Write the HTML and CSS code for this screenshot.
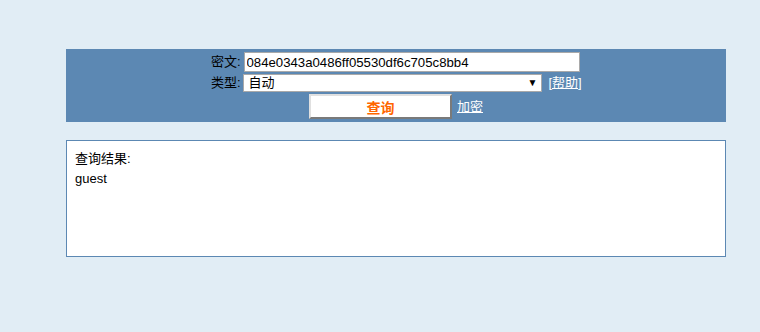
FILE: index.html
```html
<!DOCTYPE html>
<html lang="zh-CN">
<head>
  <meta charset="UTF-8">
  <title>MD5 查询</title>
  <link rel="stylesheet" href="styles.css">
</head>
<body>
  <!-- Query form panel -->
  <div class="panel">
    <div class="form-grid">
      <label class="label" for="hash">密文:</label>
      <input class="hash-input" id="hash" type="text" value="084e0343a0486ff05530df6c705c8bb4">
      <label class="label" for="type">类型:</label>
      <div class="type-cell">
        <div class="type-select" id="type">
          <span>自动</span>
          <span class="arrow">▼</span>
        </div>
        <a href="#" class="panel-link">[帮助]</a>
      </div>
    </div>
    <div class="actions">
      <button class="query-button" type="button">查询</button>
      <a href="#" class="panel-link">加密</a>
    </div>
  </div>

  <!-- Result box -->
  <div class="result">
    <div>查询结果:</div>
    <div>guest</div>
  </div>
</body>
</html>
```

FILE: styles.css
```css
body {
  margin: 0;
  background-color: #e1edf5;
  font-family: "Liberation Sans", "Noto Sans CJK SC", sans-serif;
  font-size: 13px;
  color: #000;
}
/* Blue query panel */
.panel {
  width: 660px;
  height: 73px;
  margin: 49px 0 0 66px;
  padding-top: 3px;
  background-color: #5c88b3;
  display: flex;
  flex-direction: column;
  align-items: center;
  box-sizing: border-box;
}
.form-grid {
  display: grid;
  grid-template-columns: 37px 342px;
  grid-template-rows: 20px 18px;
  row-gap: 2px;
  align-items: center;
  margin-left: -2px;
}
.label {
  font-size: 13px;
  line-height: 18px;
  text-align: right;
  padding-right: 2px;
  white-space: nowrap;
}
.hash-input {
  width: 336px;
  height: 20px;
  margin: 0 0 0 1px;
  padding: 0 2px;
  border: 1px solid #a9a9a9;
  box-sizing: border-box;
  font-family: "Liberation Sans", sans-serif;
  font-size: 13.2px;
  color: #000;
  background: #fff;
}
.type-cell {
  display: flex;
  align-items: center;
  gap: 7px;
  line-height: 18px;
}
.type-select {
  width: 299px;
  height: 18px;
  border: 1px solid #a9a9a9;
  box-sizing: border-box;
  background: #fff;
  display: flex;
  align-items: center;
  justify-content: space-between;
  padding: 0 3px 0 5px;
  font-size: 13px;
}
.arrow {
  font-size: 10px;
}
.panel-link {
  color: #fff;
  font-size: 13px;
  text-decoration: underline;
  white-space: nowrap;
}
/* Button row */
.actions {
  display: flex;
  align-items: center;
  gap: 5px;
  margin-top: 2px;
  line-height: 18px;
}
.query-button {
  width: 143px;
  height: 25px;
  background: #fff;
  border: 2px solid;
  border-color: #e0e0e0 #7a7a7a #7a7a7a #e0e0e0;
  color: #ff6600;
  font-family: "Noto Sans CJK SC", sans-serif;
  font-size: 14px;
  font-weight: bold;
  padding: 0;
  line-height: 1;
}
/* Result box */
.result {
  width: 660px;
  height: 117px;
  margin: 18px 0 0 66px;
  padding: 8px;
  border: 1px solid #5c88b3;
  background: #fff;
  box-sizing: border-box;
  line-height: 20px;
}
```
